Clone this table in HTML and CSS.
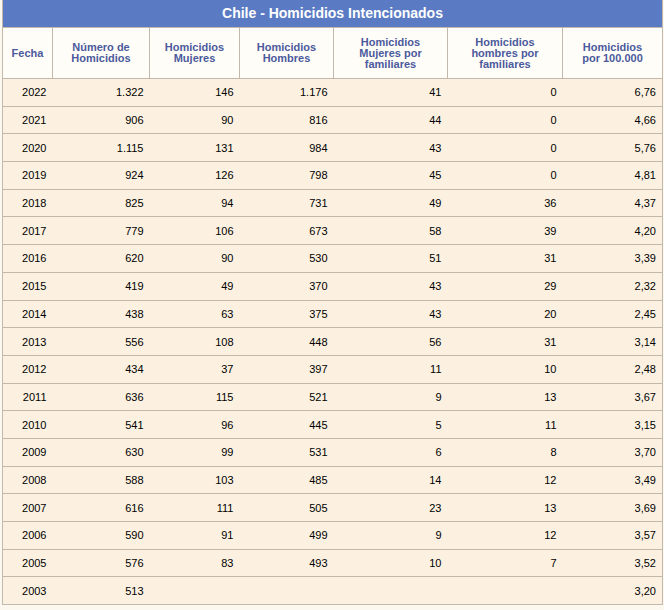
FILE: index.html
```html
<!DOCTYPE html>
<html lang="es">
<head>
<meta charset="utf-8">
<link rel="stylesheet" href="styles.css">
</head>
<body>
<table class="stats">
  <colgroup>
    <col class="c-year">
    <col class="c-num">
    <col class="c-muj">
    <col class="c-hom">
    <col class="c-mf">
    <col class="c-hf">
    <col class="c-rate">
  </colgroup>
  <thead>
    <tr><th class="title" colspan="7">Chile - Homicidios Intencionados</th></tr>
    <tr class="head">
      <th>Fecha</th>
      <th>Número de<br>Homicidios</th>
      <th>Homicidios<br>Mujeres</th>
      <th>Homicidios<br>Hombres</th>
      <th>Homicidios<br>Mujeres por<br>familiares</th>
      <th>Homicidios<br>hombres por<br>familiares</th>
      <th>Homicidios<br>por 100.000</th>
    </tr>
  </thead>
  <tbody>
    <tr><td>2022</td><td>1.322</td><td>146</td><td>1.176</td><td>41</td><td>0</td><td>6,76</td></tr>
    <tr><td>2021</td><td>906</td><td>90</td><td>816</td><td>44</td><td>0</td><td>4,66</td></tr>
    <tr><td>2020</td><td>1.115</td><td>131</td><td>984</td><td>43</td><td>0</td><td>5,76</td></tr>
    <tr><td>2019</td><td>924</td><td>126</td><td>798</td><td>45</td><td>0</td><td>4,81</td></tr>
    <tr><td>2018</td><td>825</td><td>94</td><td>731</td><td>49</td><td>36</td><td>4,37</td></tr>
    <tr><td>2017</td><td>779</td><td>106</td><td>673</td><td>58</td><td>39</td><td>4,20</td></tr>
    <tr><td>2016</td><td>620</td><td>90</td><td>530</td><td>51</td><td>31</td><td>3,39</td></tr>
    <tr><td>2015</td><td>419</td><td>49</td><td>370</td><td>43</td><td>29</td><td>2,32</td></tr>
    <tr><td>2014</td><td>438</td><td>63</td><td>375</td><td>43</td><td>20</td><td>2,45</td></tr>
    <tr><td>2013</td><td>556</td><td>108</td><td>448</td><td>56</td><td>31</td><td>3,14</td></tr>
    <tr><td>2012</td><td>434</td><td>37</td><td>397</td><td>11</td><td>10</td><td>2,48</td></tr>
    <tr><td>2011</td><td>636</td><td>115</td><td>521</td><td>9</td><td>13</td><td>3,67</td></tr>
    <tr><td>2010</td><td>541</td><td>96</td><td>445</td><td>5</td><td>11</td><td>3,15</td></tr>
    <tr><td>2009</td><td>630</td><td>99</td><td>531</td><td>6</td><td>8</td><td>3,70</td></tr>
    <tr><td>2008</td><td>588</td><td>103</td><td>485</td><td>14</td><td>12</td><td>3,49</td></tr>
    <tr><td>2007</td><td>616</td><td>111</td><td>505</td><td>23</td><td>13</td><td>3,69</td></tr>
    <tr><td>2006</td><td>590</td><td>91</td><td>499</td><td>9</td><td>12</td><td>3,57</td></tr>
    <tr><td>2005</td><td>576</td><td>83</td><td>493</td><td>10</td><td>7</td><td>3,52</td></tr>
    <tr><td>2003</td><td>513</td><td></td><td></td><td></td><td></td><td>3,20</td></tr>
  </tbody>
</table>
</body>
</html>
```
FILE: styles.css
```css
html, body {
  margin: 0;
  padding: 0;
  background: #fdf8ef;
}
body {
  padding: 0 2px;
  font-family: "Liberation Sans", Arial, sans-serif;
}
.stats {
  border-collapse: collapse;
  table-layout: fixed;
  width: 660px;
  border: 1px solid #c2b8ab;
  border-top: none;
}
.c-year { width: 50px; }
.c-num { width: 97px; }
.c-muj { width: 90px; }
.c-hom { width: 94px; }
.c-mf { width: 114px; }
.c-hf { width: 115px; }
.c-rate { width: 100px; }
.stats th.title {
  background: #5a7bc3;
  color: #ffffff;
  font-size: 14px;
  font-weight: bold;
  height: 26px;
  padding: 0 0 1px;
  text-align: center;
  border: 1px solid #c2b8ab;
  border-top: none;
}
.head th {
  background: #fffdf8;
  color: #4b5a9c;
  font-size: 11px;
  font-weight: bold;
  line-height: 11px;
  height: 50px;
  padding: 0 2px;
  text-align: center;
  vertical-align: middle;
  border: 1px solid #c2b8ab;
}
tbody td {
  background: #fcf1e0;
  color: #000000;
  font-size: 11px;
  height: 26.7px;
  padding: 0 6px 0 0;
  text-align: right;
  vertical-align: middle;
  border-top: 1px solid #c2b8ab;
  border-bottom: 1px solid #c2b8ab;
}
```
